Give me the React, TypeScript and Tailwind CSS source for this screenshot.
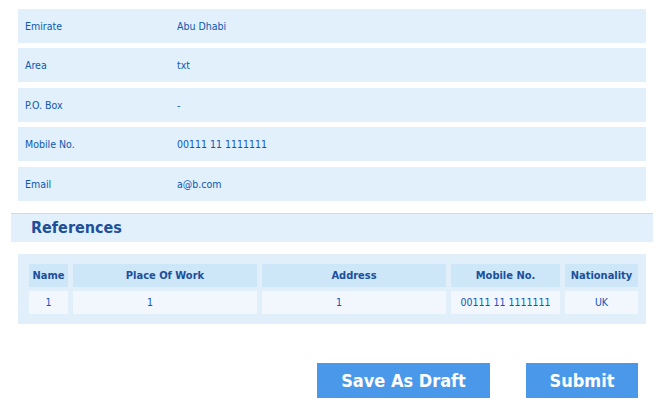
import React from "react";

const font = { fontFamily: '"DejaVu Sans Condensed", "DejaVu Sans", sans-serif' };

const rows: { label: string; value: string; mt: string }[] = [
  { label: "Emirate", value: "Abu Dhabi", mt: "mt-0" },
  { label: "Area", value: "txt", mt: "mt-[5px]" },
  { label: "P.O. Box", value: "-", mt: "mt-[6px]" },
  { label: "Mobile No.", value: "00111 11 1111111", mt: "mt-[5px]" },
  { label: "Email", value: "a@b.com", mt: "mt-[6px]" },
];

const headers = ["Name", "Place Of Work", "Address", "Mobile No.", "Nationality"];
const data: { v: string; cls: string }[] = [
  { v: "1", cls: "justify-center" },
  { v: "1", cls: "justify-start pl-[74px]" },
  { v: "1", cls: "justify-start pl-[74px]" },
  { v: "00111 11 1111111", cls: "justify-center" },
  { v: "UK", cls: "justify-center" },
];

export default function App() {
  return (
    <div className="w-[669px] h-[414px] bg-white pl-[11px] pr-[16px] pt-[9px]" style={font}>
      <div className="mx-[7px] flex flex-col">
        {rows.map((r) => (
          <div key={r.label} className={`${r.mt} h-[34px] pt-[2px] bg-[#e1f0fa] flex items-center text-[10.5px] text-[#0d58b3]`}>
            <div className="w-[159px] pl-[7px]">{r.label}</div>
            <div>{r.value}</div>
          </div>
        ))}
      </div>

      <div className="mt-[12px] h-[29px] bg-[#e1f0fa] border-t border-[#d6d8da] flex items-center pl-[20px]">
        <span className="text-[16px] font-bold text-[#1c4f9c] leading-none">References</span>
      </div>

      <div className="mx-[7px] mt-[12px] bg-[#e1effa] pl-[11px] pr-[8px] pt-[10px] pb-[10px]">
        <div className="grid grid-cols-[39px_184px_184px_109px_73px] gap-x-[5px] gap-y-[4px]">
          {headers.map((h) => (
            <div key={h} className="h-[23px] pt-[1px] bg-[#cde6f8] flex items-center justify-center text-[11px] font-bold text-[#1c4f9c]">
              {h}
            </div>
          ))}
          {data.map((d, i) => (
            <div key={i} className={`h-[23px] pt-[1px] bg-[#f1f7fc] flex items-center ${d.cls} text-[10.5px] text-[#0d58b3]`}>
              {d.v}
            </div>
          ))}
        </div>
      </div>

      <div className="mt-[39px] mr-[15px] flex justify-end gap-[36px]">
        <button className="w-[173px] h-[35px] bg-[#4a98e9] text-white text-[18px] font-bold flex items-center justify-center">
          Save As Draft
        </button>
        <button className="w-[112px] h-[35px] bg-[#4a98e9] text-white text-[18px] font-bold flex items-center justify-center">
          Submit
        </button>
      </div>
    </div>
  );
}
